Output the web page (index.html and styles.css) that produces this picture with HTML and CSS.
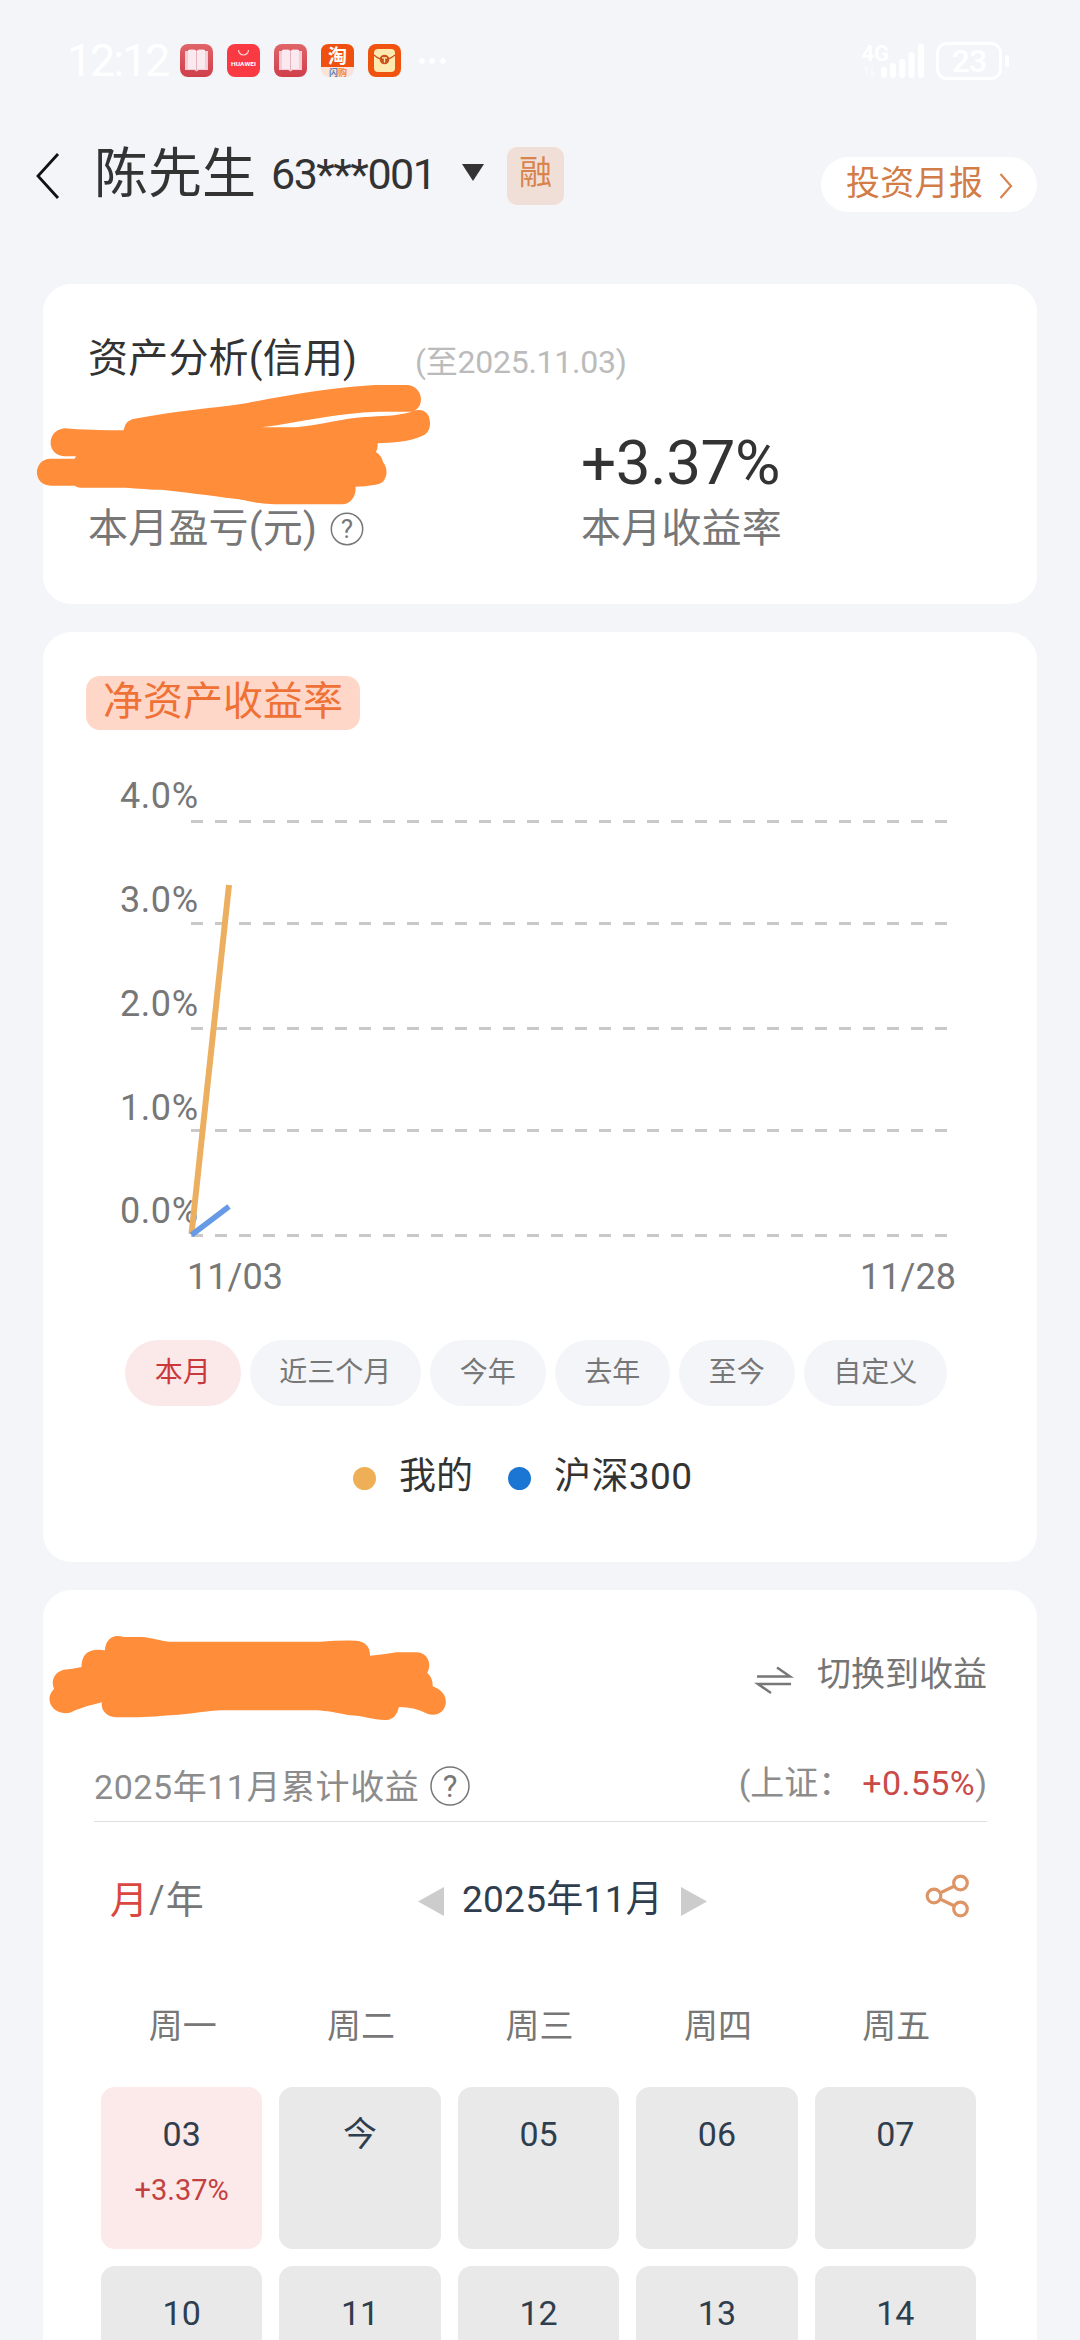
FILE: index.html
```html
<!DOCTYPE html>
<html lang="zh-CN">
<head>
<meta charset="utf-8">
<title>资产分析</title>
<link rel="stylesheet" href="styles.css">
</head>
<body>
<div class="status">
  <span class="clock">12:12</span>
  <div class="apps">
    <svg class="app" viewBox="0 0 33 33">
      <defs><linearGradient id="rd" x1="0" y1="0" x2="0" y2="1"><stop offset="0" stop-color="#e06468"/><stop offset="1" stop-color="#cf3f4b"/></linearGradient></defs>
      <rect width="33" height="33" rx="8" fill="url(#rd)"/><path d="M5 7h4V5.500h5q2 0 2.500 2Q17 5.500 19 5.500h5V7h4v19h-9.500l-2 1.500-2-1.500H5z" fill="#f5cdd6"/><path d="M8 6h6q2 0 2.500 2v18q-1-1-3-1H8zM25 6h-6q-2 0-2.500 2v18q1-1 3-1H25z" fill="#fbe9f0"/><path d="M16.500 8v18" stroke="#e5b3c0"/>
    </svg>
    <svg class="app" viewBox="0 0 33 33"><rect width="33" height="33" rx="8" fill="#f93a43"/><path d="M11.500 6a5 5 0 0 0 10 0" fill="none" stroke="#ffd5d5" stroke-width="1.200"/><text x="16.500" y="21.500" class="hw" textLength="25" lengthAdjust="spacingAndGlyphs">HUAWEI</text></svg>
    <svg class="app" viewBox="0 0 33 33">
      <rect width="33" height="33" rx="8" fill="url(#rd)"/><path d="M5 7h4V5.500h5q2 0 2.500 2Q17 5.500 19 5.500h5V7h4v19h-9.500l-2 1.500-2-1.500H5z" fill="#f5cdd6"/><path d="M8 6h6q2 0 2.500 2v18q-1-1-3-1H8zM25 6h-6q-2 0-2.500 2v18q1-1 3-1H25z" fill="#fbe9f0"/><path d="M16.500 8v18" stroke="#e5b3c0"/>
    </svg>
    <svg class="app" viewBox="0 0 33 33"><rect width="33" height="33" rx="8" fill="#fae3d8"/><path d="M0 23V8q0-8 8-8h17q8 0 8 8v15z" fill="#f0500f"/><text x="16.500" y="19" class="tao">淘</text><text x="12.500" y="31.500" class="sg sg-blue">闪</text><text x="21.500" y="31.500" class="sg">购</text></svg>
    <svg class="app" viewBox="0 0 33 33"><rect width="33" height="33" rx="8" fill="#f0520f"/><rect x="6" y="5" width="21" height="23" rx="4" fill="#ffe9ae"/><path d="M6 11q10 9 21 0" fill="none" stroke="#c8501c" stroke-width="1.300"/><circle cx="16.500" cy="15.500" r="4.800" fill="#c9511c"/><path d="M14 13.800h5M16.500 13.800v4.700" stroke="#ffe9ae" stroke-width="1.300"/></svg>
  </div>
  <svg class="dots" viewBox="0 0 28 8"><g fill="#fff"><circle cx="4" cy="4" r="2.800"/><circle cx="14" cy="4" r="2.800"/><circle cx="25" cy="4" r="2.800"/></g></svg>
  <svg class="signal" viewBox="862 40 64 40">
    <text x="861.500" y="60" class="g4">4G</text>
    <g fill="#fff"><rect x="881" y="66" width="6" height="11" rx="3"/><rect x="890" y="62" width="6" height="15" rx="3"/><rect x="899.300" y="58" width="6" height="19" rx="3"/><rect x="908.500" y="51" width="6" height="26" rx="3"/><rect x="918" y="42.500" width="6" height="34.500" rx="3"/></g>
    <path d="M867 75V66l-3 3M872 66v9l3-3" fill="none" stroke="#f8f9fc" stroke-width="2"/>
  </svg>
  <div class="battery">23</div><i class="nub"></i>
</div>

<header class="header">
  <svg class="back" viewBox="0 0 22 46"><path d="M22 1L2 23l20 22" fill="none" stroke="#111" stroke-width="2.800"/></svg>
  <h1 class="name">陈先生</h1>
  <span class="account">63***001</span>
  <svg class="caret" viewBox="0 0 22 17"><path d="M0 0h22L11 17z" fill="#333"/></svg>
  <span class="badge">融</span>
  <a class="report">投资月报<svg class="more" viewBox="0 0 14 26"><path d="M1.500 1L12 13 1.500 25" fill="none" stroke="#d9834f" stroke-width="2.200"/></svg></a>
</header>

<section class="card summary">
  <div class="summary-title"><h2>资产分析(信用)</h2><span class="asof">(至2025.11.03)</span></div>
  <div class="summary-grid">
    <div class="metric"><span class="value"></span><span class="label">本月盈亏(元)<svg class="help" viewBox="0 0 34 34"><circle cx="17" cy="17" r="15.700" class="ring"/><text x="17" y="26" class="q">?</text></svg></span></div>
    <div class="metric"><span class="value">+3.37%</span><span class="label">本月收益率</span></div>
  </div>
  <svg class="scribble scribble-a" viewBox="100 340 1160 370" preserveAspectRatio="none"><path d="M188 476Q260 482 360 482Q366 448 400 446C500 425 620 416 720 400C850 374 950 356 1090 346H1180C1234 346 1236 420 1198 424C1240 412 1252 440 1250 466C1248 492 1232 498 1210 506C1170 520 1140 518 1098 521Q1100 535 1093 547Q1108 555 1114 578Q1124 590 1124 610C1120 636 1110 642 1092 645Q1060 651 1034 651C1036 680 1020 704 995 704H830C740 704 720 692 690 688C600 676 540 668 470 660C420 660 390 654 350 654H235Q225 654 218 648H150C94 648 96 568 148 567H218L222 560H188C134 556 136 482 188 476ZM762 473H860C930 466 1000 446 1060 442C1110 438 1150 440 1198 426H1100C980 430 880 456 762 473Z" fill="#ff8d3a" fill-rule="evenodd"/></svg>
</section>

<section class="card returns">
  <h2 class="tag">净资产收益率</h2>
  <svg class="chart" viewBox="43 730 994 610">
    <g class="axis">
      <text x="120" y="808" textLength="78">4.0%</text><text x="120" y="912" textLength="78">3.0%</text><text x="120" y="1015.500" textLength="78">2.0%</text><text x="120" y="1120" textLength="78">1.0%</text><text x="120" y="1223" textLength="78">0.0%</text>
      <text x="187" y="1289" textLength="96">11/03</text><text x="860" y="1289" textLength="96">11/28</text>
    </g>
    <path class="grid" d="M191 821.500H947M191 923.500H947M191 1028.500H947M191 1130.500H947M191 1235.500H947"/>
    <path d="M191.500 1234L229 885" fill="none" stroke="#ebaf5f" stroke-width="6"/>
    <path d="M191.500 1235L229 1206.500" fill="none" stroke="#6699e6" stroke-width="5.500"/>
  </svg>
  <div class="chips"><span class="chip active">本月</span><span class="chip">近三个月</span><span class="chip">今年</span><span class="chip">去年</span><span class="chip">至今</span><span class="chip">自定义</span></div>
  <div class="legend"><i class="dot mine"></i><span class="mine-name">我的</span><i class="dot index"></i><span class="index-name">沪深300</span></div>
</section>

<section class="card calendar">
  <div class="switch"><svg class="swap" viewBox="0 0 36 28"><path d="M1 10.500H34L21 1.500M35 18H2L15 27" fill="none" stroke="#777" stroke-width="2.500"/></svg><span>切换到收益</span></div>
  <div class="total"><span class="total-name">2025年11月累计收益</span><svg class="help-lg" viewBox="0 0 40 40"><circle cx="20" cy="20" r="19" class="ring"/><text x="20" y="31" class="q">?</text></svg><span class="sse">(上证：<b>+0.55%</b>)</span></div>
  <div class="nav">
    <span class="mode"><b>月</b>/年</span>
    <div class="month"><svg class="tri" viewBox="0 0 26 29"><path d="M26 0v29L0 14.500z" fill="#ccc"/></svg><span>2025年11月</span><svg class="tri" viewBox="0 0 26 29"><path d="M0 0v29l26-14.500z" fill="#ccc"/></svg></div>
    <svg class="share" viewBox="0 0 44 46"><g fill="none" stroke="#de9566" stroke-width="3.200"><circle cx="9" cy="23" r="6.800"/><circle cx="35.500" cy="10" r="6.800"/><circle cx="35.500" cy="36" r="6.800"/><path d="M15 20l14.500-7M15 26l14.500 7"/></g></svg>
  </div>
  <div class="week"><span>周一</span><span>周二</span><span>周三</span><span>周四</span><span>周五</span></div>
  <div class="days">
    <div class="day gain"><span>03</span><em>+3.37%</em></div><div class="day">今</div><div class="day">05</div><div class="day">06</div><div class="day">07</div>
    <div class="day">10</div><div class="day">11</div><div class="day">12</div><div class="day">13</div><div class="day">14</div>
  </div>
  <svg class="scribble scribble-b" viewBox="130 130 1170 270" preserveAspectRatio="none"><path d="M304 182C306 150 326 132 358 142H410C440 144 465 154 490 156H930Q980 152 1034 153C1060 156 1074 170 1074 198Q1110 196 1150 188H1212C1242 192 1254 222 1240 250Q1256 262 1256 290C1284 302 1295 318 1294 340C1290 372 1264 380 1240 372C1210 356 1190 354 1158 352Q1150 386 1128 390C1090 394 1060 378 1010 376C970 368 950 364 920 362H640C580 366 540 376 470 378C420 384 380 382 335 383C308 380 292 362 295 338C250 350 230 356 206 368C160 382 122 334 156 298C146 270 158 248 184 240Q210 238 236 232C236 194 256 174 304 182Z" fill="#ff8d3a"/></svg>
</section>
</body>
</html>
```
FILE: styles.css
```css
* { box-sizing: border-box; }
body {
  margin: 0;
  width: 1080px;
  height: 2340px;
  overflow: hidden;
  background: #f3f5f9;
  color: #333;
  font-family: Roboto, "Noto Sans CJK SC", sans-serif;
}
h1, h2 { margin: 0; font-weight: 400; }
b { font-weight: 400; }
svg { display: block; flex: none; overflow: visible; }

/* Status bar */
.status { display: flex; align-items: center; height: 121px; padding: 0 71px 0 67px; color: #fff; }
.clock { width: 113px; font-size: 45px; line-height: 50px; letter-spacing: -2.2px; }
.apps { display: flex; gap: 14px; }
.app { width: 33px; height: 33px; }
.hw { font: 700 6px Roboto, sans-serif; fill: #fff; text-anchor: middle; }
.tao { font: 700 19px "Noto Sans CJK SC", sans-serif; fill: #fff; text-anchor: middle; }
.sg { font: 700 9px "Noto Sans CJK SC", sans-serif; fill: #ef8a4a; text-anchor: middle; }
.sg-blue { fill: #5b7fb8; }
.dots { width: 28px; height: 8px; margin-left: 17px; }
.signal { width: 64px; height: 40px; margin-left: auto; margin-right: 10px; }
.g4 { font: 700 22px Roboto, sans-serif; fill: #fff; }
.battery { width: 66px; height: 38px; border: 3px solid #fff; border-radius: 11px; text-align: center; font-size: 32px; line-height: 32px; font-weight: 500; letter-spacing: -1px; }
.nub { width: 4px; height: 12px; margin-left: 3px; border-radius: 2px; background: #fff; }

/* Account header */
.header { display: flex; align-items: center; height: 110px; margin-bottom: 53px; padding: 0 43px 0 36px; }
.back { width: 22px; height: 46px; margin-right: 36px; }
.name { font-size: 54px; line-height: 64px; margin-bottom: 2px; }
.account { width: 191px; margin: 0 0 4px 15px; font-size: 43px; line-height: 50px; letter-spacing: -1.5px; }
.caret { width: 22px; height: 17px; margin: 0 23px 7px 0; }
.badge { width: 57px; height: 58px; border-radius: 10px; background: #f0dfd6; color: #d9834f; font-size: 33px; line-height: 52px; text-align: center; }
.report { display: flex; align-items: center; width: 216px; height: 55px; margin: 17px 0 0 auto; padding: 0 0 3px 25px; border-radius: 28px; background: #fff; color: #d27c48; font-size: 34px; line-height: 50px; white-space: nowrap; letter-spacing: 0.3px; }
.more { width: 14px; height: 26px; margin: 5px 0 0 16px; }

/* Cards */
.card { position: relative; width: 994px; margin: 0 43px 28px; border-radius: 28px; background: #fff; }
.scribble { position: absolute; }

.summary { height: 320px; padding: 51px 45px 0; }
.summary-title { display: flex; align-items: center; height: 48px; margin-bottom: 44px; }
.summary-title h2 { width: 327px; font-size: 40px; line-height: 48px; letter-spacing: 0.2px; }
.asof { margin-top: 5px; color: #bbb; font-size: 32px; line-height: 40px; letter-spacing: -0.25px; }
.summary-grid { display: grid; grid-template-columns: 493px 1fr; }
.metric { display: flex; flex-direction: column; }
.value { height: 72px; font-size: 62px; line-height: 72px; letter-spacing: -0.4px; }
.label { display: flex; align-items: center; height: 60px; color: #777; font-size: 40px; line-height: 60px; letter-spacing: 0.2px; }
.help { width: 34px; height: 34px; margin-left: 13px; }
.ring { fill: none; stroke: #777; stroke-width: 1.5; }
.q { font: 26px Roboto, sans-serif; fill: #777; text-anchor: middle; letter-spacing: 0; }
.scribble-a { left: -8.600px; top: 99.300px; width: 399.400px; height: 123.300px; }

.returns { height: 930px; padding-top: 44px; }
.tag { width: 274px; height: 54px; margin-left: 43px; border-radius: 14px; background: #ffd7c8; color: #ef7136; font-size: 40px; line-height: 52px; text-align: center; }
.chart { width: 994px; height: 610px; }
.axis text { font: 36px Roboto, sans-serif; fill: #777; }
.grid { fill: none; stroke: #c9c9c9; stroke-width: 3; stroke-dasharray: 12 12; }
.chips { display: flex; gap: 9px; padding-left: 82px; }
.chip { height: 66px; padding: 0 29.750px; border-radius: 33px; background: #f3f5f9; color: #777; font-size: 28px; line-height: 65px; }
.chip.active { background: #fbe9e9; color: #c9383a; }
.legend { display: flex; align-items: center; height: 50px; margin: 46px 0 0 310px; font-size: 37px; line-height: 50px; }
.dot { width: 23px; height: 23px; margin-top: 2px; border-radius: 50%; }
.mine { background: #efaf57; }
.mine-name { margin: 0 35px 0 23px; }
.index { margin-right: 23px; background: #1a76d2; }
.index-name { letter-spacing: 0.4px; }

.calendar { height: 780px; padding-top: 60px; }
.switch { display: flex; align-items: center; justify-content: flex-end; gap: 25px; height: 52px; padding-right: 50px; color: #757575; font-size: 34px; line-height: 48px; }
.switch span { margin-bottom: 4px; }
.swap { width: 36px; height: 28px; margin-top: 7px; }
.total { display: flex; align-items: center; height: 62px; margin: 58px 50px 0 51px; border-bottom: 1px solid #dedede; color: #8c8c8c; font-size: 34px; line-height: 40px; }
.total-name { margin-bottom: 7px; letter-spacing: 0.55px; }
.help-lg { width: 40px; height: 40px; margin: 0 0 9px 11px; }
.help-lg .q { font-size: 31px; }
.sse { margin: 0 0 15px auto; }
.sse b { margin-left: 10px; color: #c94a48; letter-spacing: 0.4px; }
.nav { display: flex; align-items: center; height: 60px; margin: 48px 60px 0 67px; }
.mode { width: 308px; color: #777; font-size: 38px; line-height: 60px; letter-spacing: 1px; }
.mode b { color: #d9483f; }
.month { display: flex; align-items: center; width: 289px; justify-content: space-between; color: #2f3e4e; font-size: 37px; line-height: 60px; letter-spacing: 0.3px; }
.tri { width: 26px; height: 29px; margin-top: 3px; }
.share { width: 44px; height: 46px; margin: 0 8px 8px auto; }
.week, .days { display: grid; grid-template-columns: repeat(5, 1fr); column-gap: 17px; margin: 0 61px 0 58px; text-align: center; }
.week { height: 60px; margin: 66px 60px 0 59px; color: #777; font-size: 34px; line-height: 60px; }
.days { margin-top: 31px; row-gap: 17px; color: #2f3e4e; font-size: 34px; }
.day { display: flex; flex-direction: column; align-items: center; height: 162px; padding-top: 21px; border-radius: 14px; background: #e9e9e9; line-height: 52px; }
.gain { background: #fce9e9; }
.day em { margin-top: 8px; color: #c2403f; font-size: 29px; line-height: 44px; font-style: normal; }
.scribble-b { left: 1.800px; top: 43.300px; width: 402.900px; height: 90px; }
```
